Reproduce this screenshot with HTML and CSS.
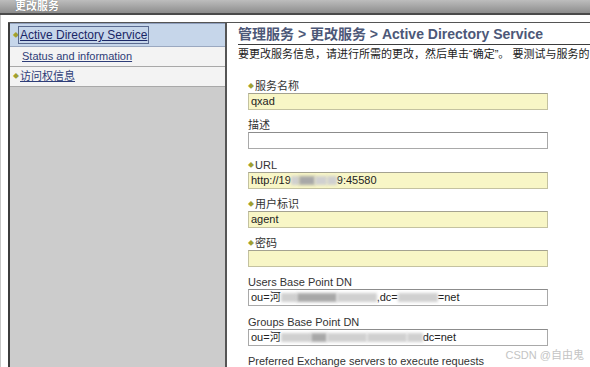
FILE: index.html
```html
<!DOCTYPE html>
<html lang="zh-CN">
<head>
    <meta charset="UTF-8">
    <title>更改服务</title>
    <link rel="stylesheet" href="styles.css">
</head>
<body>
    <div class="titlebar">更改服务</div>
    <div class="frame">
        <div class="panel">
            <div class="sidebar">
                <div class="nav-item active"><span class="star">◆</span><a href="#" class="focus">Active Directory Service</a></div>
                <div class="nav-item sub"><a href="#">Status and information</a></div>
                <div class="nav-item"><span class="star">◆</span><a href="#">访问权信息</a></div>
            </div>
            <div class="main">
                <h1 class="crumbs">管理服务 &gt; 更改服务 &gt; Active Directory Service</h1>
                <p class="intro">要更改服务信息，请进行所需的更改，然后单击“确定”。 要测试与服务的</p>
                <div class="form">
                    <div class="field">
                        <label><span class="req">◆</span>服务名称</label>
                        <div class="input required">qxad</div>
                    </div>
                    <div class="field">
                        <label>描述</label>
                        <div class="input"></div>
                    </div>
                    <div class="field">
                        <label><span class="req">◆</span>URL</label>
                        <div class="input required">http://19<span class="blur w8"></span><span class="blur w16 dark"></span><span class="blur w12"></span><span class="blur w10"></span>9:45580</div>
                    </div>
                    <div class="field">
                        <label><span class="req">◆</span>用户标识</label>
                        <div class="input required">agent</div>
                    </div>
                    <div class="field">
                        <label><span class="req">◆</span>密码</label>
                        <div class="input required"></div>
                    </div>
                    <div class="field">
                        <label>Users Base Point DN</label>
                        <div class="input">ou=河<span class="blur w16"></span><span class="blur w40 dark"></span><span class="blur w40"></span>,dc=<span class="blur w40"></span>=net</div>
                    </div>
                    <div class="field">
                        <label>Groups Base Point DN</label>
                        <div class="input">ou=河<span class="blur w30"></span><span class="blur w16 dark"></span><span class="blur w40"></span><span class="blur w40"></span><span class="blur w16"></span>dc=net</div>
                    </div>
                    <div class="field">
                        <label>Preferred Exchange servers to execute requests</label>
                    </div>
                </div>
            </div>
        </div>
    </div>
    <div class="watermark">CSDN @自由鬼</div>
</body>
</html>
```

FILE: styles.css
```css
body {
    margin: 0;
    font-family: "Liberation Sans", Arial, "Noto Sans CJK SC", sans-serif;
    font-size: 11px;
    color: #222;
    background-color: white;
    height: 367px;
    overflow: hidden;
    position: relative;
}
.titlebar {
    height: 13px;
    line-height: 13px;
    padding-left: 15px;
    background: linear-gradient(#bdbdbd, #8d8d8d);
    border-bottom: 2px solid #4a4a4a;
    color: white;
    font-weight: bold;
    text-shadow: 0 0 1px #555;
}
.frame {
    border-left: 1px solid #c8c8c8;
    padding-top: 7px;
    padding-left: 7px;
    height: 345px;
}
.panel {
    display: flex;
    border-top: 1px solid #555;
    height: 100%;
}
.sidebar {
    width: 215px;
    flex-shrink: 0;
    background-color: #cccccc;
    border-left: 2px solid #3c3c3c;
    border-right: 2px solid #555;
}
.nav-item {
    height: 19px;
    line-height: 19px;
    padding-left: 3px;
    background-color: #f3f3f3;
    border-bottom: 1px solid #a8a8a8;
}
.nav-item a {
    color: #2e3d78;
    text-decoration: underline;
}
.nav-item.active {
    height: 22px;
    line-height: 22px;
    background-color: #c6d6ea;
    border-top: 1px solid #8f9fbd;
    border-bottom: 1px solid #9aa8c0;
}
.nav-item.active a {
    color: #1a2766;
    font-size: 12px;
    outline: 1px solid #5a6a90;
    outline-offset: 1px;
}
.nav-item.sub {
    padding-left: 12px;
}
.star,
.req {
    color: #a0a030;
    font-size: 6px;
    vertical-align: 2px;
    margin-right: 1px;
}
.main {
    flex: 1;
    padding-left: 11px;
    min-width: 0;
    overflow: hidden;
}
.crumbs {
    margin: 0;
    height: 20px;
    padding-top: 1px;
    line-height: 20px;
    font-size: 14px;
    color: #4d5878;
    border-bottom: 1px solid #3c3c3c;
    white-space: nowrap;
}
.intro {
    margin: 2px 0 0;
    line-height: 15px;
    white-space: nowrap;
    color: #222;
}
.form {
    padding-left: 10px;
    margin-top: 17px;
}
.field {
    margin-bottom: 8.3px;
}
.field label {
    display: block;
    height: 14px;
    line-height: 14px;
    color: #333;
}
.input {
    width: 296px;
    height: 15px;
    line-height: 15px;
    padding-left: 2px;
    border: 1px solid #a9a9a9;
    border-top-color: #8c8c8c;
    background-color: white;
    white-space: nowrap;
    overflow: hidden;
}
.input.required {
    background-color: #f8f6c6;
    border-color: #c4c2a0;
    border-top-color: #a4a290;
}
.blur {
    display: inline-block;
    height: 9px;
    vertical-align: -1px;
    background-color: #d0d0d0;
    filter: blur(1.5px);
}
.blur.dark {
    background-color: #a8a8a8;
}
.w8 { width: 8px; }
.w10 { width: 10px; }
.w12 { width: 12px; }
.w16 { width: 16px; }
.w30 { width: 30px; }
.w40 { width: 40px; }
.watermark {
    position: absolute;
    right: 6px;
    bottom: 5px;
    color: #c4c4c4;
    font-size: 11px;
}
```
